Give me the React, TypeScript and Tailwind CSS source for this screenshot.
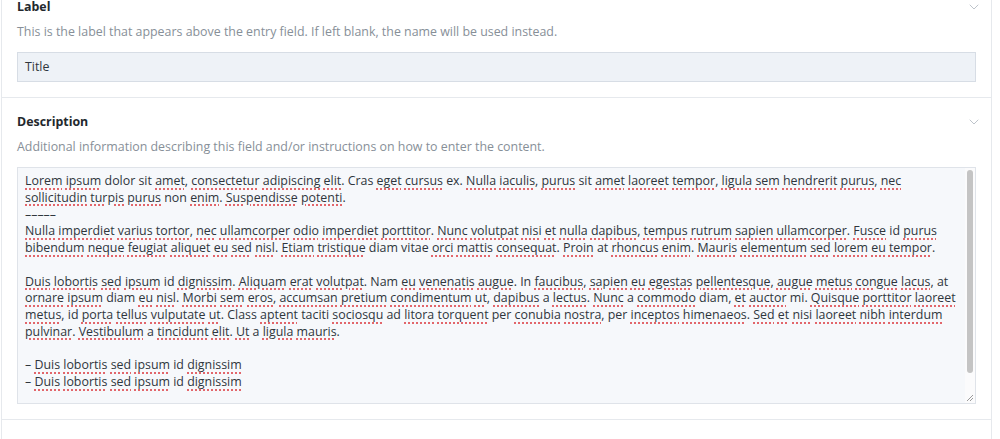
import { ChevronDown } from "lucide-react";

const font = { fontFamily: '"Open Sans", "Noto Sans", sans-serif' };

// words the spell checker leaves alone
const known = new Set(["dolor", "sit", "ex", "non", "id", "diam", "vitae", "at", "a", "In", "Nam", "mi", "Class", "taciti", "ad", "per", "Cras"]);

const lines = [
  "Lorem ipsum dolor sit amet, consectetur adipiscing elit. Cras eget cursus ex. Nulla iaculis, purus sit amet laoreet tempor, ligula sem hendrerit purus, nec",
  "sollicitudin turpis purus non enim. Suspendisse potenti.",
  "–––––",
  "Nulla imperdiet varius tortor, nec ullamcorper odio imperdiet porttitor. Nunc volutpat nisi et nulla dapibus, tempus rutrum sapien ullamcorper. Fusce id purus",
  "bibendum neque feugiat aliquet eu sed nisl. Etiam tristique diam vitae orci mattis consequat. Proin at rhoncus enim. Mauris elementum sed lorem eu tempor.",
  "",
  "Duis lobortis sed ipsum id dignissim. Aliquam erat volutpat. Nam eu venenatis augue. In faucibus, sapien eu egestas pellentesque, augue metus congue lacus, at",
  "ornare ipsum diam eu nisl. Morbi sem eros, accumsan pretium condimentum ut, dapibus a lectus. Nunc a commodo diam, et auctor mi. Quisque porttitor laoreet",
  "metus, id porta tellus vulputate ut. Class aptent taciti sociosqu ad litora torquent per conubia nostra, per inceptos himenaeos. Sed et nisi laoreet nibh interdum",
  "pulvinar. Vestibulum a tincidunt elit. Ut a ligula mauris.",
  "",
  "– Duis lobortis sed ipsum id dignissim",
  "– Duis lobortis sed ipsum id dignissim",
];

function Line({ text }: { text: string }) {
  if (!text) return <div className="h-[16.75px]" />;
  const tokens = text.split(" ");
  return (
    <div className="whitespace-nowrap h-[16.75px]">
      {tokens.map((t, i) => {
        const m = t.match(/^([A-Za-z]+)(.*)$/);
        const sep = i < tokens.length - 1 ? " " : "";
        if (!m || known.has(m[1])) return <span key={i}>{t + sep}</span>;
        return (
          <span key={i}>
            <span className="underline decoration-dotted decoration-[#e2666b] decoration-[1.5px] underline-offset-[3px]">{m[1]}</span>
            {m[2] + sep}
          </span>
        );
      })}
    </div>
  );
}

function Section({ title, help, children }: { title: string; help: string; children: React.ReactNode }) {
  return (
    <div className="border-b border-[#e6e9ed] pl-[15px] pr-[15px] pt-4 pb-[15px]">
      <div className="flex items-center justify-between h-4">
        <div className="text-[12.4px] leading-4 font-bold text-[#23282d]">{title}</div>
        <ChevronDown size={16} strokeWidth={1.4} className="text-[#b9bfc7] -mr-[6px]" />
      </div>
      <div className="mt-[9px] text-[12.4px] leading-4 text-[#878f98]">{help}</div>
      <div className="mt-3">{children}</div>
    </div>
  );
}

export default function App() {
  return (
    <div className="w-full h-[439px] overflow-hidden bg-white" style={font}>
      <div className="ml-px w-[991px] -mt-[17px] border-x border-[#e6e9ed]">
        <Section title="Label" help="This is the label that appears above the entry field. If left blank, the name will be used instead.">
          <div className="h-[30px] border border-[#d7dde5] bg-[#eef2f7] px-[7px] flex items-center text-[12.4px] text-[#2f363d]">
            Title
          </div>
        </Section>

        <Section title="Description" help="Additional information describing this field and/or instructions on how to enter the content.">
          <div className="relative h-[237px] border border-[#dfe3e9] bg-[#f6f8fb] pl-[7px] pt-[5px] overflow-hidden text-[12.4px] leading-[16.75px] text-[#2f363d]">
            {lines.map((l, i) => (
              <Line key={i} text={l} />
            ))}
            {/* scrollbar + resize grip */}
            <div className="absolute right-0 top-0 bottom-0 w-[10px] bg-[#fbfbfc]">
              <div className="mx-auto mt-[2px] w-[6px] h-[203px] rounded-full bg-[#c4c4c4]" />
            </div>
            <svg className="absolute right-[1px] bottom-[1px]" width="8" height="8" viewBox="0 0 8 8">
              <path d="M7 1 L1 7 M7 4 L4 7" stroke="#9a9a9a" strokeWidth="1" fill="none" />
            </svg>
          </div>
        </Section>

        <div className="h-[40px]" />
      </div>
    </div>
  );
}
